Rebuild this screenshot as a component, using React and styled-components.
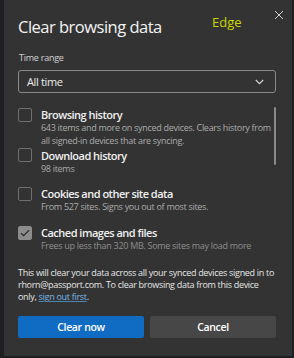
import React, { useState } from 'react';
import styled, { createGlobalStyle } from 'styled-components';

const GlobalStyle = createGlobalStyle`
    html, body {
        margin: 0;
        padding: 0;
        background: #1d1f22;
    }
    body {
        font-family: 'Open Sans', 'Noto Sans', sans-serif;
        -webkit-font-smoothing: antialiased;
    }
`;

const Page = styled.div`
    width: 294px;
    height: 358px;
    overflow: hidden;
    display: flex;
    padding-left: 4px;
    box-sizing: border-box;
`;

const Dialog = styled.div`
    position: relative;
    width: 288px;
    height: 356px;
    box-sizing: border-box;
    background: #333333;
    padding: 16px 16px 0 14px;
    display: flex;
    flex-direction: column;
    color: #f0f0f0;
`;

const Title = styled.h1`
    margin: 0;
    font-size: 16.5px;
    line-height: 22.5px;
    font-weight: 400;
    color: #f3f3f3;
    letter-spacing: -0.5px;
`;

const Tag = styled.span`
    position: absolute;
    left: 208px;
    top: 13px;
    font-size: 13px;
    line-height: 18px;
    color: #cbd800;
`;

const CloseBtn = styled.button`
    position: absolute;
    right: 8px;
    top: 9px;
    width: 11px;
    height: 11px;
    padding: 0;
    border: none;
    background: none;
    cursor: pointer;
    display: flex;
    align-items: center;
    justify-content: center;
`;

const Label = styled.div`
    margin-top: 13.5px;
    font-size: 9px;
    line-height: 12.3px;
    letter-spacing: -0.25px;
    color: #d2d2d2;
    padding-left: 1px;
`;

const Select = styled.div`
    margin-top: 6px;
    height: 23px;
    box-sizing: border-box;
    border: 1px solid #8a8a8a;
    border-radius: 3px;
    display: flex;
    align-items: center;
    justify-content: space-between;
    padding: 0 11px 0 8px;
    font-size: 11px;
    letter-spacing: -0.35px;
    color: #ececec;
    cursor: pointer;
`;

const List = styled.div`
    margin-top: 14px;
    display: flex;
    gap: 3px;
`;

const Items = styled.div`
    flex: 1;
    display: flex;
    flex-direction: column;
`;

const Thumb = styled.div`
    width: 5px;
    height: 58px;
    border-radius: 3px;
    background: #8a8a8a;
`;

const Item = styled.label`
    display: flex;
    align-items: flex-start;
    gap: 9px;
    margin-top: ${(p) => p.space}px;
    cursor: pointer;
`;

const Box = styled.span`
    flex: none;
    width: 14px;
    height: 14px;
    margin-top: 0.5px;
    box-sizing: border-box;
    border-radius: 2px;
    border: 1px solid ${(p) => (p.checked ? '#8c8c8c' : '#6f6f6f')};
    background: ${(p) => (p.checked ? '#8c8c8c' : 'transparent')};
    display: flex;
    align-items: center;
    justify-content: center;
`;

const ItemText = styled.div`
    display: flex;
    flex-direction: column;
`;

const ItemTitle = styled.div`
    font-size: 11px;
    line-height: 15px;
    font-weight: 600;
    color: #f0f0f0;
    letter-spacing: -0.5px;
`;

const ItemDesc = styled.div`
    font-size: 9px;
    line-height: 12.3px;
    letter-spacing: -0.3px;
    color: ${(p) => (p.dim ? '#8e8e8e' : '#ababab')};
    white-space: nowrap;
`;

const Note = styled.p`
    margin: 14px 0 0;
    font-size: 9px;
    line-height: 12.3px;
    letter-spacing: -0.3px;
    color: #e6e6e6;
    white-space: nowrap;

    & a {
        color: #76b9ee;
        text-decoration: underline;
        text-decoration-color: #4f86b0;
    }
`;

const Buttons = styled.div`
    margin-top: 12px;
    display: grid;
    grid-template-columns: 1fr 1fr;
    gap: 6px;
`;

const Button = styled.button`
    height: 22px;
    border: none;
    border-radius: 2px;
    font-family: inherit;
    font-size: 10.5px;
    letter-spacing: -0.35px;
    font-weight: 600;
    color: #ffffff;
    background: ${(p) => (p.primary ? '#0f6cc2' : '#474747')};
    cursor: pointer;
`;

const Check = () => (
    <svg width="10" height="8" viewBox="0 0 10 8" fill="none">
        <path d="M1 4.2L3.6 6.6L9 1.2" stroke="#2e2e2e" strokeWidth="1.3" />
    </svg>
);

const items = [
    {
        id: 'history',
        title: 'Browsing history',
        desc: ['643 items and more on synced devices. Clears history from', 'all signed-in devices that are syncing.'],
        space: 0,
    },
    { id: 'downloads', title: 'Download history', desc: ['98 items'], space: 1 },
    { id: 'cookies', title: 'Cookies and other site data', desc: ['From 527 sites. Signs you out of most sites.'], space: 11 },
    { id: 'cache', title: 'Cached images and files', desc: ['Frees up less than 320 MB. Some sites may load more'], space: 12, dim: true },
];

export default function App() {
    const [checked, setChecked] = useState({ cache: true });
    const toggle = (id) => setChecked((c) => ({ ...c, [id]: !c[id] }));

    return (
        <>
            <GlobalStyle />
            <Page>
                <Dialog>
                    <Title>Clear browsing data</Title>
                    <Tag>Edge</Tag>
                    <CloseBtn aria-label="Close">
                        <svg width="10" height="10" viewBox="0 0 10 10">
                            <path d="M1 1L9 9M9 1L1 9" stroke="#cfcfcf" strokeWidth="1" />
                        </svg>
                    </CloseBtn>
                    <Label>Time range</Label>
                    <Select>
                        All time
                        <svg width="9" height="6" viewBox="0 0 9 6" fill="none">
                            <path d="M0.8 1L4.5 4.7L8.2 1" stroke="#d6d6d6" strokeWidth="1.1" />
                        </svg>
                    </Select>
                    <List>
                        <Items>
                            {items.map((it) => (
                                <Item key={it.id} space={it.space} onClick={() => toggle(it.id)}>
                                    <Box checked={checked[it.id]}>{checked[it.id] && <Check />}</Box>
                                    <ItemText>
                                        <ItemTitle>{it.title}</ItemTitle>
                                        <ItemDesc dim={it.dim}>
                                            {it.desc.map((d, i) => (
                                                <React.Fragment key={d}>
                                                    {i > 0 && <br />}
                                                    {d}
                                                </React.Fragment>
                                            ))}
                                        </ItemDesc>
                                    </ItemText>
                                </Item>
                            ))}
                        </Items>
                        <Thumb />
                    </List>
                    <Note>
                        This will clear your data across all your synced devices signed in to
                        <br />
                        rhorn@passport.com. To clear browsing data from this device
                        <br />
                        only, <a href="#">sign out first</a>.
                    </Note>
                    <Buttons>
                        <Button primary>Clear now</Button>
                        <Button>Cancel</Button>
                    </Buttons>
                </Dialog>
            </Page>
        </>
    );
}
